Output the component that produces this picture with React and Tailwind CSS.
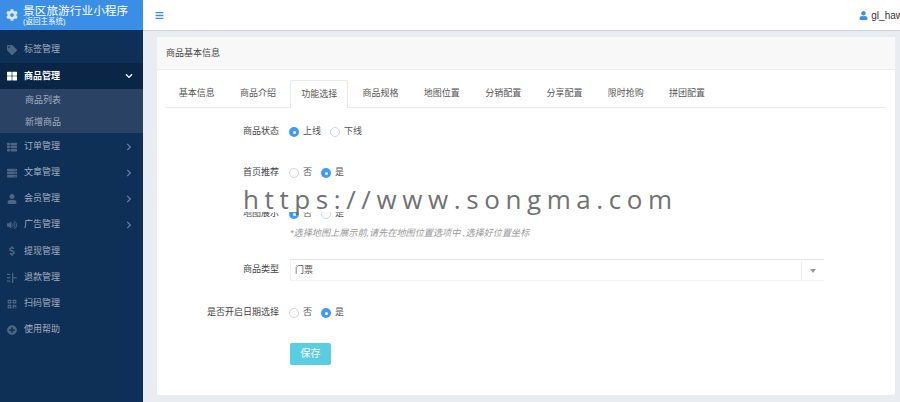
import React from "react";
import {
  FaBars,
  FaChevronDown,
  FaChevronRight,
  FaCog,
  FaDollarSign,
  FaPlusCircle,
  FaQrcode,
  FaTag,
  FaThLarge,
  FaThList,
  FaServer,
  FaUser,
  FaVolumeUp,
} from "react-icons/fa";

const FONT = "font-['Liberation_Sans','Noto_Sans_CJK_SC',sans-serif]";

const TABS = ["基本信息", "商品介绍", "功能选择", "商品规格", "地图位置", "分销配置", "分享配置", "限时抢购", "拼团配置"];

function BarsIcon() {
  // 退款管理: small bar chart glyph
  return (
    <svg width="10" height="10" viewBox="0 0 12 12" fill="currentColor">
      <rect x="0" y="1" width="4" height="1.5" />
      <rect x="0" y="5" width="4" height="1.5" />
      <rect x="0" y="9" width="4" height="1.5" />
      <rect x="6" y="0" width="1.5" height="12" />
      <rect x="7.5" y="5" width="4" height="1.5" />
    </svg>
  );
}

function MenuRow({ icon, label, arrow, active }) {
  return (
    <div className={`flex h-[26.2px] items-center pl-[3px] pr-[10px] pt-[1px] text-[9px] ${active ? "bg-[#0a2546] font-bold text-white" : "text-[#a3aebd]"}`}>
      <span className={`flex w-[17px] justify-center text-[10px] ${active ? "text-white" : "text-[#4f6683]"}`}>{icon}</span>
      <span className="ml-[4px] flex-1">{label}</span>
      {arrow === "right" && <FaChevronRight className="text-[8px] text-[#6f819a]" />}
      {arrow === "down" && <FaChevronDown className="text-[8px] text-white" />}
    </div>
  );
}

function Radio({ checked, label }) {
  return (
    <span className="mr-[9px] flex items-center">
      {checked ? (
        <span className="flex h-[10px] w-[10px] items-center justify-center rounded-full bg-[#3f9bf8]">
          <span className="h-[3px] w-[3px] rounded-full bg-white" />
        </span>
      ) : (
        <span className="h-[10px] w-[10px] rounded-full border border-[#d5d5d5] bg-white" />
      )}
      <span className="ml-[4px] text-[9px] text-[#555]">{label}</span>
    </span>
  );
}

function FormRow({ label, className, children }) {
  return (
    <div className={`flex items-center ${className}`}>
      <div className="w-[113px] text-right text-[9px] text-[#444]">{label}</div>
      <div className="ml-[10px] flex flex-1 items-center">{children}</div>
    </div>
  );
}

export default function App() {
  return (
    <div className={`relative flex h-[402px] w-[900px] overflow-hidden bg-[#e9ecf1] ${FONT}`}>
      {/* barre latérale */}
      <aside className="flex w-[143px] shrink-0 flex-col bg-[#0e2f56]">
        <div className="flex h-[30px] items-center bg-[#3a8ee6] pl-[6px] text-white">
          <FaCog className="text-[12px] text-[#d5e6f8]" />
          <div className="ml-[5px] flex flex-col">
            <span className="text-[11.7px] leading-[14px]">景区旅游行业小程序</span>
            <span className="text-[7.5px] leading-[8px]">(返回主系统)</span>
          </div>
        </div>
        <div className="mt-[6.6px]">
          <MenuRow icon={<FaTag />} label="标签管理" />
          <MenuRow icon={<FaThLarge />} label="商品管理" arrow="down" active />
          <div className="bg-[#2a4365] text-[9px] text-[#a3aebd]">
            <div className="flex h-[22px] items-center pl-[25px] pt-[1px]">商品列表</div>
            <div className="flex h-[22px] items-center pl-[25px] pt-[1px]">新增商品</div>
          </div>
          <MenuRow icon={<FaThList />} label="订单管理" arrow="right" />
          <MenuRow icon={<FaServer />} label="文章管理" arrow="right" />
          <MenuRow icon={<FaUser />} label="会员管理" arrow="right" />
          <MenuRow icon={<FaVolumeUp />} label="广告管理" arrow="right" />
          <MenuRow icon={<FaDollarSign />} label="提现管理" />
          <MenuRow icon={<BarsIcon />} label="退款管理" />
          <MenuRow icon={<FaQrcode />} label="扫码管理" />
          <MenuRow icon={<FaPlusCircle />} label="使用帮助" />
        </div>
      </aside>

      <main className="flex min-w-0 flex-1 flex-col">
        {/* en-tête */}
        <header className="flex h-[31px] shrink-0 items-center justify-between border-b border-[#cfd2d6] bg-white pl-[12px]">
          <FaBars className="text-[9px] text-[#3a8ee6]" />
          <div className="-mr-[3px] flex items-center whitespace-nowrap text-[10px] text-[#333]">
            <FaUser className="mr-[3px] text-[9px] text-[#3a8ee6]" />
            gl_haw
          </div>
        </header>

        {/* carte */}
        <section className="ml-[14px] mr-[5px] mt-[6px] flex h-[358px] flex-col rounded-[2px] bg-white">
          <div className="flex h-[33px] shrink-0 items-center border-b border-[#eeeeee] bg-[#f8f8f8] pl-[9px] pt-[1px] text-[9px] text-[#444]">
            商品基本信息
          </div>
          <div className="px-[9px] pt-[10px]">
            <div className="flex h-[28px] items-stretch border-b border-[#eaeaea] pt-[1px] text-[9px] text-[#555]">
              {TABS.map((tab) =>
                tab === "功能选择" ? (
                  <div key={tab} className="relative mx-[1.5px] -mb-[1px] -mt-[1px] flex w-[58.3px] items-center justify-center rounded-t-[2px] border border-b-0 border-[#eaeaea] bg-white pt-[1px]">
                    {tab}
                  </div>
                ) : (
                  <div key={tab} className="flex w-[61.3px] items-center justify-center">
                    {tab}
                  </div>
                )
              )}
            </div>

            <div className="flex flex-col pt-[15px]">
              <FormRow label="商品状态" className="h-[18px]">
                <Radio checked label="上线" />
                <Radio label="下线" />
              </FormRow>
              <FormRow label="首页推荐" className="mt-[23px] h-[18px]">
                <Radio label="否" />
                <Radio checked label="是" />
              </FormRow>
              <FormRow label="地图展示" className="mt-[23px] h-[18px]">
                <Radio checked label="否" />
                <Radio label="是" />
              </FormRow>
              <div className="mt-[3px] h-[14px] pl-[124px] text-[9.15px] italic leading-[14px] text-[#999]">
                *选择地图上展示前,请先在地图位置选项中 ,选择好位置坐标
              </div>
              <FormRow label="商品类型" className="mt-[19px] h-[22px]">
                <div className="ml-[1px] flex h-[22px] w-[534px] items-center border-t border-b border-l border-t-[#e5e5e5] border-b-[#f4f4f4] border-l-[#f0f0f0] pt-[1px] text-[9px] text-[#555]">
                  <span className="flex-1 pl-[4px]">门票</span>
                  <span className="flex h-full w-[23px] items-center justify-center border-l border-[#eeeeee]">
                    <span className="h-0 w-0 border-x-[3.5px] border-t-[4px] border-x-transparent border-t-[#999]" />
                  </span>
                </div>
              </FormRow>
              <FormRow label="是否开启日期选择" className="mt-[23px] h-[18px]">
                <Radio label="否" />
                <Radio checked label="是" />
              </FormRow>
              <div className="mt-[18px] pl-[124px]">
                <button className="h-[22px] w-[41px] rounded-[2px] bg-[#5bcde0] text-[10px] text-white">保存</button>
              </div>
            </div>
          </div>
        </section>
      </main>

      {/* filigrane par-dessus le formulaire */}
      <div className="absolute left-[240px] top-[186px] h-[26px] w-[432px] bg-white pl-[3px] font-['Open_Sans',sans-serif] text-[26px] leading-[26px] tracking-[5.6px] whitespace-nowrap text-[#717175]">
        https://www.songma.com
      </div>
    </div>
  );
}
